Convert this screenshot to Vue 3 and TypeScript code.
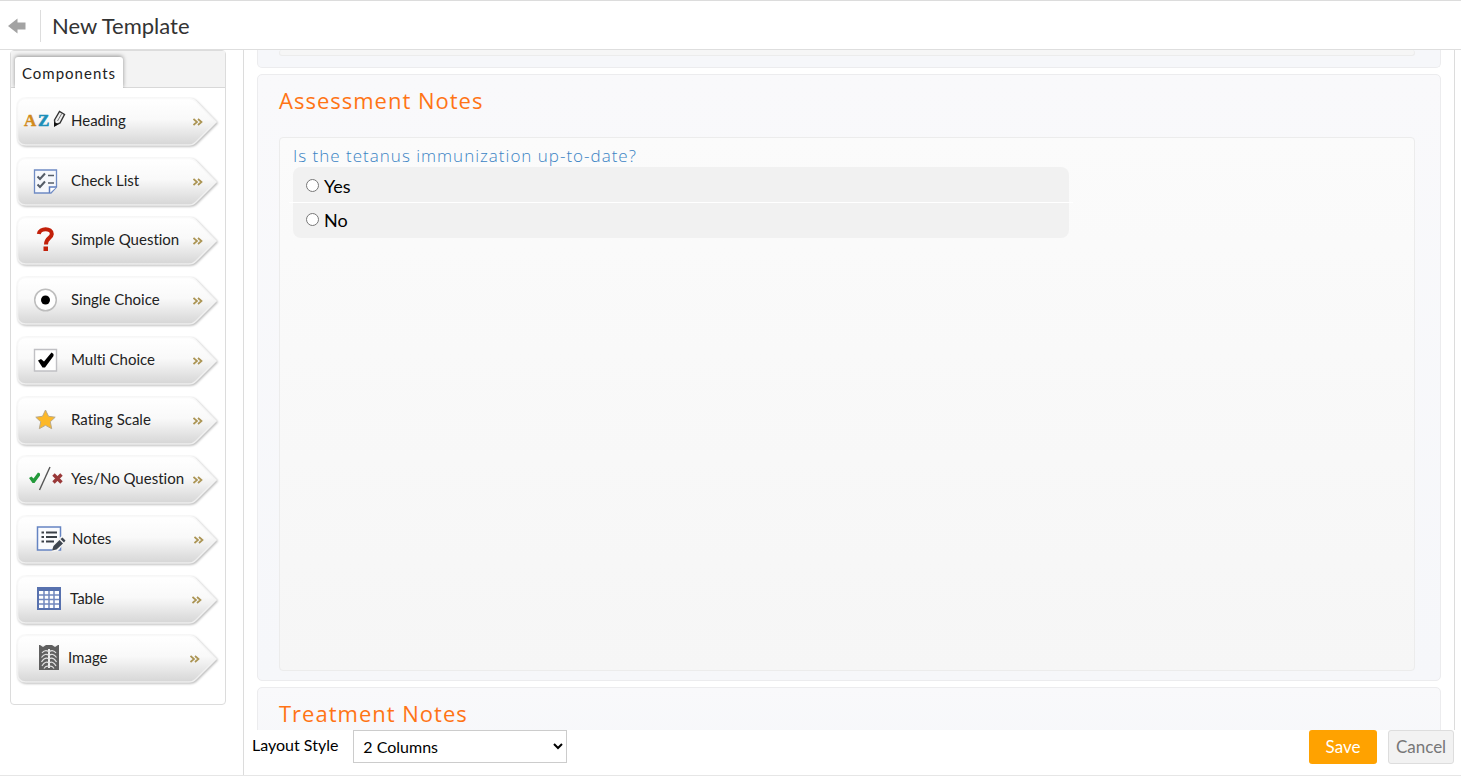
<script setup lang="ts">
import { ref } from 'vue'

type IconName =
  | 'heading' | 'checklist' | 'question' | 'single' | 'multi'
  | 'rating' | 'yesno' | 'notes' | 'table' | 'image'

interface ComponentItem {
  icon: IconName
  label: string
  iconWidth: number
}

const components: ComponentItem[] = [
  { icon: 'heading', label: 'Heading', iconWidth: 51 },
  { icon: 'checklist', label: 'Check List', iconWidth: 51 },
  { icon: 'question', label: 'Simple Question', iconWidth: 51 },
  { icon: 'single', label: 'Single Choice', iconWidth: 51 },
  { icon: 'multi', label: 'Multi Choice', iconWidth: 51 },
  { icon: 'rating', label: 'Rating Scale', iconWidth: 51 },
  { icon: 'yesno', label: 'Yes/No Question', iconWidth: 51 },
  { icon: 'notes', label: 'Notes', iconWidth: 52 },
  { icon: 'table', label: 'Table', iconWidth: 50 },
  { icon: 'image', label: 'Image', iconWidth: 48 },
]

const layouts = ['1 Column', '2 Columns', '3 Columns']
const layout = ref('2 Columns')
const answer = ref('')
</script>

<template>
  <div class="page">
    <header class="header">
      <button class="back" type="button" aria-label="Back">
        <svg width="18" height="16" viewBox="0 0 18 16">
          <path d="M0 8 L9.500 0.500 V4.500 H17.500 V11.500 H9.500 V15.500 Z" fill="#a3a3a3" />
        </svg>
      </button>
      <h1 class="title">New Template</h1>
    </header>

    <div class="body">
      <aside class="sidebar">
        <div class="tabs">
          <button class="tab" type="button">Components</button>
        </div>
        <ul class="list">
          <li v-for="item in components" :key="item.icon" class="row">
            <button class="item" type="button">
              <svg class="shape" width="204" height="54" viewBox="-1 -1 204 54" aria-hidden="true">
                <defs>
                  <linearGradient :id="'fill-' + item.icon" x1="0" y1="0" x2="0" y2="1">
                    <stop offset="0" stop-color="#ffffff" />
                    <stop offset="0.450" stop-color="#f9f9f9" />
                    <stop offset="1" stop-color="#d6d6d6" />
                  </linearGradient>
                  <linearGradient :id="'edge-' + item.icon" x1="0" y1="0" x2="0" y2="1">
                    <stop offset="0" stop-color="#f9f9f9" />
                    <stop offset="1" stop-color="#eeeeee" />
                  </linearGradient>
                </defs>
                <path class="cast" d="M9 0.500 H172 Q176 0.500 179 3.500 L199 24 L179 44 Q176 47 172 47 H9 Q0.500 47 0.500 38.500 V9 Q0.500 0.500 9 0.500 Z" :fill="`url(#fill-${item.icon})`" :stroke="`url(#edge-${item.icon})`" stroke-width="1.500" />
              </svg>

              <svg class="icon" :width="item.iconWidth" height="40" aria-hidden="true">
                <g v-if="item.icon === 'heading'">
                  <text x="4" y="26" class="az" fill="#d18a1b" stroke="#d18a1b" stroke-width="0.400">A</text>
                  <text x="18" y="26" class="az" fill="#1d8fb8" stroke="#1d8fb8" stroke-width="0.600">Z</text>
                  <path d="M34.500 20 L39.500 11.500 L44.500 14.500 L40 23 L35 25.500 Z" fill="#f0f0f0" stroke="#333" stroke-width="1.400" />
                  <path d="M37.500 21 L41.800 13.500" stroke="#777" stroke-width="1" />
                  <path d="M34 22 L38.500 24 L34 27 Z" fill="#111" />
                </g>
                <g v-else-if="item.icon === 'checklist'" fill="none">
                  <path d="M14.500 10 H36.500 V27 L31 33 H14.500 Z" fill="#f6f8fc" stroke="#6f8bc4" stroke-width="1.300" />
                  <path d="M29.500 33 V27 H36.500" fill="#fff" stroke="#5f7dbd" stroke-width="1.500" />
                  <path d="M17.500 16.500 L20 19 L25 13.500 M17.500 24.500 L20 27 L25 21.500" stroke="#555d68" stroke-width="2" />
                  <path d="M28 15.500 H34 M28 23 H34" stroke="#555d68" stroke-width="1.500" />
                </g>
                <g v-else-if="item.icon === 'question'" fill="none">
                  <path d="M18.800 15 C19.500 8.500 32 8.500 31.800 15 C31.500 19.500 26 18.500 26 25.500" stroke="#c2200a" stroke-width="4" />
                  <path d="M23.500 27.500 H28 V32 H23.500 Z" fill="#c2200a" />
                </g>
                <g v-else-if="item.icon === 'single'">
                  <circle cx="25.500" cy="21" r="10.800" fill="#fff" stroke="#bdbdbd" stroke-width="1.500" />
                  <circle cx="25.500" cy="21" r="4.500" fill="#000" />
                </g>
                <g v-else-if="item.icon === 'multi'">
                  <path d="M14.500 10.500 H36.500 V32 H14.500 Z" fill="#fff" stroke="#c0c0c4" stroke-width="1.400" />
                  <path d="M18 21.500 L21 20 L24 22.500 L31.500 13.500 L33.500 15 V17 L25 28.500 H22.500 Z" fill="#000" />
                </g>
                <g v-else-if="item.icon === 'rating'">
                  <path d="M25.500 11 L28.500 17.300 L35.200 18.200 L30.300 22.800 L31.700 29.700 L25.500 26.300 L19.300 29.700 L20.700 22.800 L15.800 18.200 L22.500 17.300 Z" fill="#fdb827" stroke="#b9a98a" stroke-width="1" />
                </g>
                <g v-else-if="item.icon === 'yesno'">
                  <path d="M9 20 L11.500 18.500 L13.500 20.500 L18 14.500 L20 15.500 V17.500 L14.500 25 H12.500 Z" fill="#239a3b" />
                  <path d="M30 9 L19.500 32" stroke="#555" stroke-width="1.400" />
                  <path d="M33.500 16.500 L41.500 24.500 M41.500 16.500 L33.500 24.500" stroke="#993838" stroke-width="3.400" />
                </g>
                <g v-else-if="item.icon === 'notes'">
                  <path d="M17.500 9 H40.500 V32 H17.500 Z" fill="#fafbfe" stroke="#6584c2" stroke-width="1.500" />
                  <path d="M21.500 14.500 H24 M21.500 19 H24 M21.500 23.500 H24 M26 14.500 H37 M26 19 H37 M26 23.500 H34" stroke="#3a4048" stroke-width="2.200" />
                  <path d="M31.500 34 L34 25.500 L41.500 18 L46.500 22 L38 33 Z" fill="#f5f5f5" />
                  <path d="M32 32.500 L33.500 28 L39.500 22 L43 25.500 L36.500 31.500 Z M40.500 21 L42.500 19.500 L45.500 22.500 L44 24.500 Z" fill="#3f4650" />
                </g>
                <g v-else-if="item.icon === 'table'">
                  <path d="M17 9 H41 V32 H17 Z" fill="#5771ae" />
                  <path d="M19 13 H39 V30 H19 Z" fill="#fff" />
                  <path d="M24 13 V30 M29 13 V30 M34 13 V30 M19 17 H39 M19 21.500 H39 M19 26 H39" stroke="#7288be" stroke-width="1.500" />
                </g>
                <g v-else>
                  <path d="M19 8 H39 V33 H19 Z" fill="#606060" />
                  <path d="M29 12 V31" stroke="#f0f0f0" stroke-width="2" />
                  <path d="M22 16 Q25 12 29 15 Q33 12 36 16 M21.500 20.500 Q25 15.500 29 18.500 Q33 15.500 36.500 20.500 M21.500 25 Q25 19.500 29 22 Q33 19.500 36.500 25 M22 29 Q25 23.500 29 26 Q33 23.500 36 29 M24 31.500 Q26 28 29 29.500 Q32 28 34 31.500" fill="none" stroke="#e0e0e0" stroke-width="1.200" />
                  <path d="M20 8 L23 10 L26 8 Z M32 8 L35 10 L38 8 Z" fill="#f4f4f4" />
                </g>
              </svg>

              <span class="label">{{ item.label }}</span>
              <svg class="more" width="10" height="8" viewBox="0 0 10 8" aria-hidden="true">
                <path d="M0.500 1 L4 4 L0.500 7 M5 1 L8.500 4 L5 7" fill="none" stroke="#ab9453" stroke-width="1.700" />
              </svg>
            </button>
          </li>
        </ul>
      </aside>

      <main class="main">
        <div class="canvas">
          <section class="section section-above">
            <div class="panel panel-above"></div>
          </section>

          <section class="section">
            <h2 class="section-title">Assessment Notes</h2>
            <div class="panel">
              <fieldset class="question">
                <legend class="prompt">Is the tetanus immunization up-to-date?</legend>
                <div class="options">
                  <label class="option"><input v-model="answer" type="radio" name="tetanus" value="yes" />Yes</label>
                  <div class="divider"></div>
                  <label class="option"><input v-model="answer" type="radio" name="tetanus" value="no" />No</label>
                </div>
              </fieldset>
            </div>
          </section>

          <section class="section">
            <h2 class="section-title">Treatment Notes</h2>
          </section>
        </div>

        <footer class="footer">
          <label class="layout-label" for="layout-style">Layout Style</label>
          <select id="layout-style" v-model="layout" class="layout-select">
            <option v-for="name in layouts" :key="name">{{ name }}</option>
          </select>
          <div class="actions">
            <button class="save" type="button">Save</button>
            <button class="cancel" type="button">Cancel</button>
          </div>
        </footer>
      </main>
    </div>
  </div>
</template>

<style>
body {
  margin: 0;
  background: #fff;
}
</style>

<style scoped>
.page {
  display: flex;
  flex-direction: column;
  box-sizing: border-box;
  height: 100vh;
  overflow: hidden;
  border-top: 1px solid #dcdcdc;
  border-bottom: 1px solid #e6e6e6;
  color: #222;
  font-family: Lato, "Liberation Sans", sans-serif;
  font-variant-ligatures: none;
}

button,
select {
  font-family: inherit;
  font-variant-ligatures: inherit;
  cursor: pointer;
}

.header {
  display: flex;
  flex: none;
  align-items: center;
  box-sizing: border-box;
  height: 49px;
  padding-top: 2px;
  border-bottom: 1px solid #dedede;
}

.back {
  display: flex;
  align-items: center;
  width: 41px;
  height: 32px;
  padding: 0 0 0 8px;
  border: 0;
  border-right: 1px solid #ddd;
  background: none;
}

.title {
  margin: 0 0 0 11px;
  color: #333;
  font-size: 22px;
  font-weight: 400;
  line-height: 30px;
}

.body {
  display: flex;
  flex: 1;
  min-height: 0;
}

.sidebar {
  align-self: flex-start;
  flex: none;
  box-sizing: border-box;
  width: 216px;
  margin-left: 10px;
  border: 1px solid #dcdcdc;
  border-radius: 4px;
}

.tabs {
  display: flex;
  align-items: flex-end;
  height: 36px;
  padding-left: 4px;
  border-bottom: 1px solid #d8d8d8;
  background: #f3f3f3;
}

.tab {
  height: 31px;
  margin-bottom: -1px;
  padding: 0 7px;
  border: 0;
  border-radius: 3px 3px 0 0;
  background: #fff;
  box-shadow: 0 -1px 4px rgba(0, 0, 0, 0.4);
  clip-path: inset(-6px -6px 0 -6px);
  color: #222;
  font-size: 15px;
  letter-spacing: 1px;
}

.list {
  display: grid;
  grid-auto-rows: 1fr;
  min-height: 597px;
  margin: 0;
  padding: 10px 0 9px 6px;
  list-style: none;
}

.item {
  display: flex;
  position: relative;
  align-items: center;
  width: 201px;
  height: 48px;
  padding: 0 0 4px 3px;
  border: 0;
  background: none;
  color: #222;
  font-size: 15px;
  line-height: 20px;
  text-align: left;
}

.shape {
  position: absolute;
  top: -1px;
  left: -1px;
}

.cast {
  filter: drop-shadow(1px 1px 1px rgba(0, 0, 0, 0.28));
}

.icon,
.label,
.more {
  position: relative;
  flex: none;
}

.az {
  font-family: "Liberation Serif", serif;
  font-size: 17px;
  font-weight: 700;
}

.label {
  width: 122px;
}

.more {
  margin-top: 4px;
}

.main {
  display: flex;
  flex: 1;
  flex-direction: column;
  min-width: 0;
  margin-left: 17px;
  padding-right: 6px;
  border-left: 1px solid #dcdcdc;
}

.canvas {
  flex: 1;
  min-height: 0;
  padding: 0 13px;
  overflow: hidden;
  border-right: 1px solid #dcdcdc;
}

.section {
  margin-bottom: 6px;
  padding: 0 25px 9px 21px;
  border: 1px solid #ececee;
  border-radius: 5px;
  background: linear-gradient(#f9f9fb, #f6f7fa);
}

.section-above {
  padding-bottom: 11px;
  border-top: 0;
  border-radius: 0 0 5px 5px;
  background: #f6f7fa;
}

.section-title {
  margin: 0;
  padding: 9px 0 21px;
  color: #ff7415;
  font-family: "Open Sans", sans-serif;
  font-size: 22px;
  font-weight: 400;
  line-height: 32px;
  letter-spacing: 1px;
}

.panel {
  box-sizing: border-box;
  min-height: 534px;
  padding: 6px 13px;
  border: 1px solid #ececec;
  border-radius: 4px;
  background: linear-gradient(#fbfbfb, #f6f6f6);
}

.panel-above {
  min-height: 6px;
  padding: 0;
  border-top: 0;
  background: #f6f6f6;
}

.question {
  min-width: 0;
  margin: 0;
  padding: 0;
  border: 0;
}

.prompt {
  padding: 0;
  color: #3a83c4;
  font-family: "Open Sans", sans-serif;
  font-size: 17px;
  font-weight: 350;
  line-height: 23px;
  letter-spacing: 1px;
}

.options {
  width: 70%;
  padding-bottom: 2px;
  border-radius: 8px;
  background: #f1f1f1;
}

.option {
  display: flex;
  align-items: center;
  height: 33px;
  padding-left: 13px;
  color: #000;
  font-size: 18px;
}

.option:first-child {
  padding-top: 2px;
}

.option input {
  width: 13px;
  height: 13px;
  margin: 0 5px 0 0;
}

.divider {
  height: 1px;
  margin: 0 -4px;
  background: #fff;
}

.footer {
  display: flex;
  flex: none;
  align-items: flex-start;
  height: 45px;
  padding-left: 8px;
}

.layout-label {
  color: #000;
  font-size: 16px;
  line-height: 30px;
}

.layout-select {
  width: 214px;
  height: 33px;
  margin-left: 15px;
  padding: 0 2px 0 5px;
  border: 1px solid #ccc;
  border-radius: 0;
  background-color: #fff;
  color: #000;
  font-size: 16px;
}

.actions {
  display: flex;
  gap: 11px;
  margin-left: auto;
  padding-right: 1px;
}

.save,
.cancel {
  height: 34px;
  padding: 0 0 2px;
  border-radius: 3px;
  font-size: 17px;
}

.save {
  width: 68px;
  border: 0;
  background: #ffa200;
  color: #fff;
}

.cancel {
  width: 66px;
  border: 1px solid #ddd;
  background: #f2f2f2;
  color: #777;
}
</style>
